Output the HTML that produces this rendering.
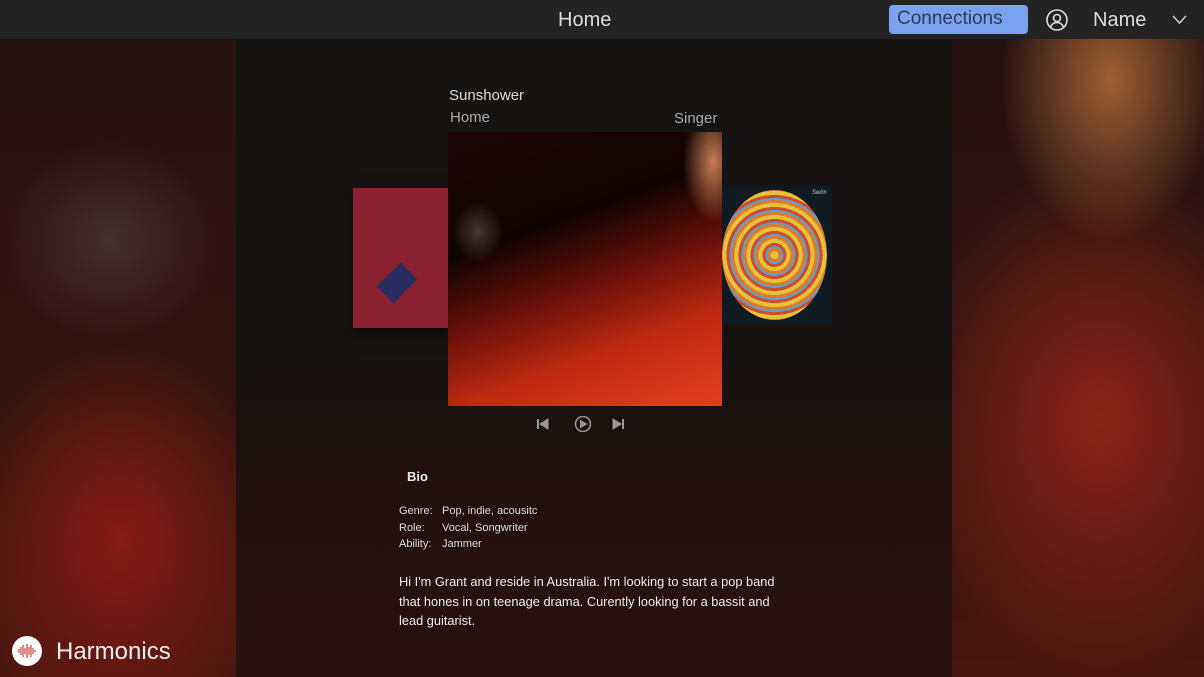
<!DOCTYPE html>
<html><head><meta charset="utf-8"><style>
*{margin:0;padding:0;box-sizing:border-box}
body{width:1204px;height:677px;overflow:hidden;font-family:"Liberation Sans",sans-serif;position:relative;background:#2a1010}
.bg{position:absolute;inset:0;background:
radial-gradient(ellipse 110px 160px at 1110px 80px,rgba(200,120,60,.75),transparent),
radial-gradient(ellipse 200px 260px at 1100px 420px,rgba(170,40,25,.75),transparent),
radial-gradient(ellipse 160px 200px at 120px 540px,rgba(160,30,20,.75),transparent),
radial-gradient(ellipse 110px 100px at 110px 240px,rgba(100,90,80,.4),transparent),
linear-gradient(180deg,#231212,#341410 60%,#4a1610);}
.top{position:absolute;left:0;top:0;width:1204px;height:39px;background:#232323;color:#ddd}
.center{position:absolute;left:236px;top:39px;width:716px;height:638px;background:linear-gradient(180deg,#161313 0%,#171312 50%,#22110f 70%,#2a1210 100%)}
.t{position:absolute;white-space:nowrap}
</style></head><body>
<div class="bg"></div>
<div class="center"></div>
<div class="top">
<div class="t" style="left:558px;top:9px;font-size:20px;color:#ddd">Home</div>
<div style="position:absolute;left:889px;top:5px;width:139px;height:29px;background:#7aa2ef;border-radius:4px"></div>
<div class="t" style="left:897px;top:8px;font-size:19px;color:#2c3b5a">Connections</div>
<svg style="position:absolute;left:1046px;top:9px" width="22" height="22" viewBox="0 0 22 22" fill="none" stroke="#ddd" stroke-width="1.6"><circle cx="11" cy="11" r="10"/><circle cx="11" cy="9" r="3.5"/><path d="M4.5 18c1.5-3.5 4-4.5 6.5-4.5s5 1 6.5 4.5"/></svg>
<div class="t" style="left:1093px;top:9px;font-size:20px;color:#ddd">Name</div>
<svg style="position:absolute;left:1172px;top:15px" width="15" height="10" viewBox="0 0 15 10" fill="none" stroke="#ccc" stroke-width="1.5"><path d="M1 1l6.5 7L14 1"/></svg>
</div>
<div class="t" style="left:449px;top:87px;font-size:15px;color:#ddd">Sunshower</div>
<div class="t" style="left:450px;top:109px;font-size:15px;color:#aaa">Home</div>
<div class="t" style="left:674px;top:110px;font-size:15px;color:#aaa">Singer</div>
<div style="position:absolute;left:353px;top:188px;width:96px;height:140px;background:#8a2030;box-shadow:0 6px 14px rgba(0,0,0,.6)">
<div style="position:absolute;left:27px;top:78px;width:34px;height:34px;background:#2a2d62;transform:rotate(45deg) scaleX(.7)"></div></div>
<div style="position:absolute;left:722px;top:186px;width:110px;height:137px;background:#0f1a22">
<div style="position:absolute;left:0;top:4px;width:105px;height:130px;border-radius:50%;background:repeating-radial-gradient(circle,#e6c23a 0 4px,#e07a2a 4px 7px,#5aa0d0 7px 9px,#d04a30 9px 12px)"></div>
<div class="t" style="left:90px;top:4px;font-size:6px;color:#ccc;font-style:italic">Swim</div></div>
<div style="position:absolute;left:448px;top:132px;width:274px;height:274px;background:
radial-gradient(ellipse 30px 60px at 265px 30px,rgba(220,140,90,.9),transparent),
radial-gradient(ellipse 25px 30px at 30px 100px,rgba(100,90,80,.6),transparent),
linear-gradient(160deg,#1a0505 0%,#120303 35%,#6a1008 55%,#c02a10 75%,#e04020 100%)"></div>
<svg style="position:absolute;left:536px;top:416px" width="96" height="16" viewBox="0 0 96 16" fill="#999" stroke="#999"><path d="M2 3v10" stroke-width="2"/><path d="M12 3L4 8l8 5z"/><circle cx="47" cy="8" r="7.5" fill="none" stroke-width="1.5"/><path d="M44.5 4.5v7l6-3.5z"/><path d="M77 3l8 5-8 5z"/><path d="M87 3v10" stroke-width="2"/></svg>
<div class="t" style="left:407px;top:469px;font-size:13px;font-weight:bold;color:#eee">Bio</div>
<div class="t" style="left:399px;top:503px;font-size:11px;color:#ddd;line-height:16.5px">Genre:<br>Role:<br>Ability:</div>
<div class="t" style="left:442px;top:503px;font-size:11px;color:#ddd;line-height:16.5px">Pop, indie, acousitc<br>Vocal, Songwriter<br>Jammer</div>
<div class="t" style="left:399px;top:572px;font-size:12.8px;color:#eee;line-height:19.5px">Hi I'm Grant and reside in Australia. I'm looking to start a pop band<br>that hones in on teenage drama. Curently looking for a bassit and<br>lead guitarist.</div>
<div style="position:absolute;left:12px;top:636px;width:30px;height:30px;border-radius:50%;background:#fff"></div>
<svg style="position:absolute;left:16px;top:641px" width="22" height="20" viewBox="0 0 22 20" stroke="#c44" stroke-width="1.2"><path d="M3 8v4M5 6v8M7 4v12M9 7v6M11 3v14M13 6v8M15 4v12M17 7v6M19 9v2"/></svg>
<div class="t" style="left:56px;top:638px;font-size:24px;color:#eee">Harmonics</div>
</body></html>
